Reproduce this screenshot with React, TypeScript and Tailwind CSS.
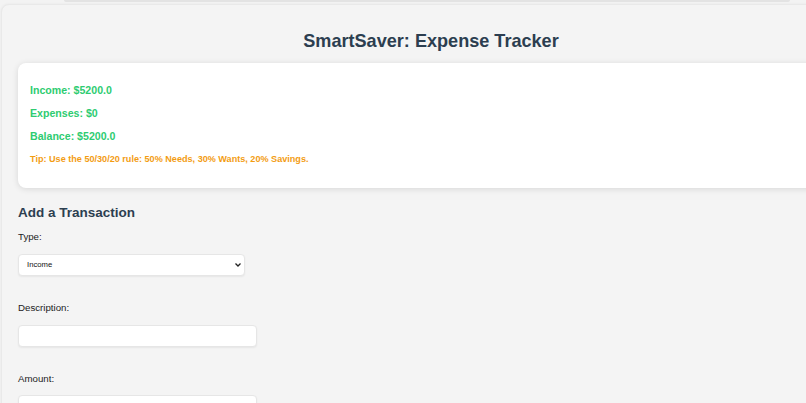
import { useState } from 'react'

type Kind = 'Income' | 'Expense'

function Summary({ income, expenses }: { income: number; expenses: number }) {
  const balance = income - expenses
  return (
    <div className="rounded-lg bg-white px-[12px] pt-[20px] pb-[23px] shadow-[0_1px_6px_rgba(0,0,0,0.12)]">
      <p className="h-[14px] text-[10.6px] leading-[14px] font-bold text-[#2ecc71]">Income: ${income.toFixed(1)}</p>
      <p className="mt-[9px] h-[14px] text-[10.6px] leading-[14px] font-bold text-[#2ecc71]">Expenses: ${expenses}</p>
      <p className="mt-[9px] h-[14px] text-[10.6px] leading-[14px] font-bold text-[#2ecc71]">Balance: ${balance.toFixed(1)}</p>
      <p className="mt-[10px] h-[12px] text-[9.1px] leading-[12px] font-bold text-[#f39c12]">
        Tip: Use the 50/30/20 rule: 50% Needs, 30% Wants, 20% Savings.
      </p>
    </div>
  )
}

export default function App() {
  const [kind, setKind] = useState<Kind>('Income')
  const [description, setDescription] = useState('')
  const [amount, setAmount] = useState('')

  return (
    <div className="h-screen overflow-hidden bg-[#f3f3f3] font-['Liberation_Sans',Arial,sans-serif]">
      {/* edge of the block scrolled above */}
      <div className="ml-[64px] mr-[16px] h-[2px] rounded-b bg-[#e3e3e3]" />

      <div className="mt-[2px] ml-[1px] w-[860px] rounded-lg border border-[#e9e9e9] bg-[#f4f4f4] px-[16px] pt-[25px] shadow-[0_0_3px_rgba(0,0,0,0.05)]">
        <h1 className="mb-[11px] text-center text-[18.1px] leading-[22px] font-bold text-[#2c3e50]">
          SmartSaver: Expense Tracker
        </h1>

        <Summary income={5200} expenses={0} />

        <h2 className="mt-[16px] text-[13.5px] leading-[18px] font-bold text-[#2c3e50]">Add a Transaction</h2>

        <form className="flex flex-col" onSubmit={(e) => e.preventDefault()}>
          <label className="mt-[9px] text-[9.7px] leading-[12px] text-[#222]">Type:</label>
          <div className="relative mt-[11px] h-[22px] w-[227px]">
            <select
              value={kind}
              onChange={(e) => setKind(e.target.value as Kind)}
              className="block h-[22px] w-full appearance-none rounded-[4px] border border-[#e6e6e6] bg-white pl-[8px] text-[7.7px] text-[#111] shadow-[0_1px_2px_rgba(0,0,0,0.06)] outline-none"
            >
              <option>Income</option>
              <option>Expense</option>
            </select>
            <svg
              className="pointer-events-none absolute top-[9px] right-[4px]"
              width="6"
              height="4"
              viewBox="0 0 6 4"
            >
              <path d="M0.5 0.5 L3 3 L5.5 0.5" fill="none" stroke="#222" strokeWidth="1.3" />
            </svg>
          </div>

          <label className="mt-[26px] text-[9.7px] leading-[12px] text-[#222]">Description:</label>
          <input
            value={description}
            onChange={(e) => setDescription(e.target.value)}
            className="mt-[11px] block h-[22px] w-[239px] rounded-[4px] border border-[#e6e6e6] bg-white px-[8px] text-[8px] shadow-[0_1px_2px_rgba(0,0,0,0.06)] outline-none"
          />

          <label className="mt-[26px] text-[9.7px] leading-[12px] text-[#222]">Amount:</label>
          <input
            value={amount}
            onChange={(e) => setAmount(e.target.value)}
            className="mt-[10px] block h-[22px] w-[239px] rounded-[4px] border border-[#e6e6e6] bg-white px-[8px] text-[8px] shadow-[0_1px_2px_rgba(0,0,0,0.06)] outline-none"
          />
        </form>
      </div>
    </div>
  )
}
